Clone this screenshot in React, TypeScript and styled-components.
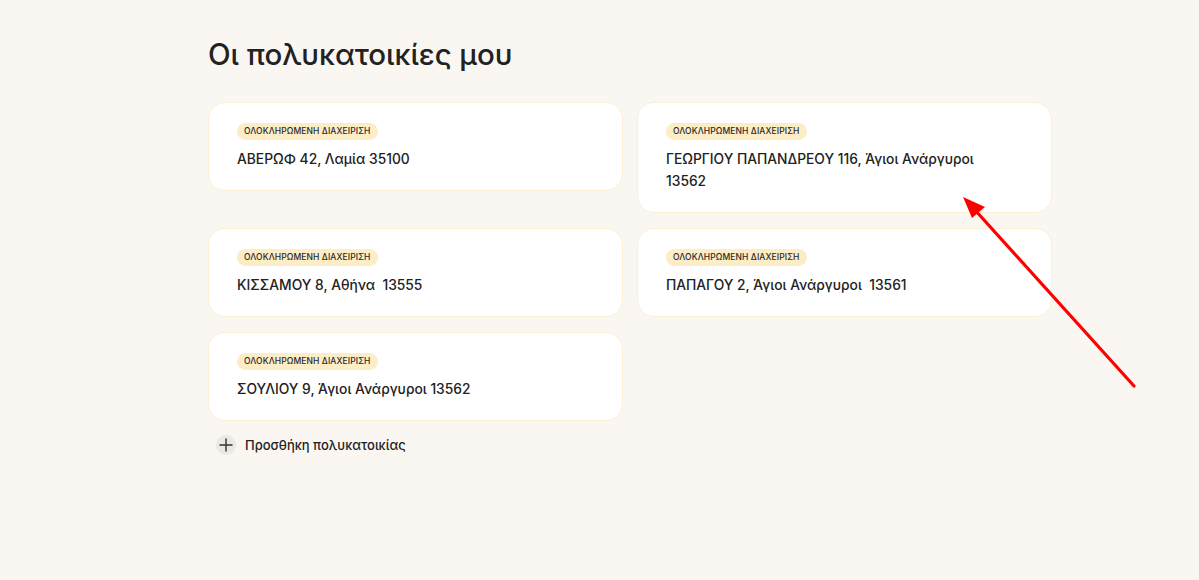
import { createGlobalStyle, styled } from "styled-components";

const GlobalStyle = createGlobalStyle`
  html, body {
    margin: 0;
    padding: 0;
    background: #faf7f2;
    font-family: Inter, "Noto Sans", sans-serif;
    color: #1f1f1f;
  }
`;

const Page = styled.div`
  position: relative;
  width: 1199px;
  height: 580px;
  overflow: hidden;
`;

const Content = styled.main`
  width: 843px;
  padding: 36px 0 0 208px;
`;

const Title = styled.h1`
  margin: 0 0 29px;
  font-size: 29.5px;
  font-weight: 500;
  line-height: 37px;
  letter-spacing: -0.1px;
  color: #222;
`;

const Grid = styled.div`
  display: grid;
  grid-template-columns: 415px 415px;
  column-gap: 14px;
  row-gap: 15px;
  align-items: start;
`;

const Card = styled.div`
  background: #fff;
  border: 1px solid #fbefd6;
  border-radius: 17px;
  padding: 20px 44px 20px 28px;
`;

const Badge = styled.div`
  width: fit-content;
  background: #fdedc6;
  border-radius: 9px;
  padding: 0 7px;
  height: 17px;
  line-height: 17px;
  font-size: 8.5px;
  font-weight: 500;
  letter-spacing: 0.1px;
  color: #2a2a2a;
`;

const Address = styled.div`
  margin-top: 8px;
  font-size: 13.8px;
  font-weight: 500;
  line-height: 22px;
  white-space: pre-wrap;
  color: #222;
`;

const AddRow = styled.button`
  display: flex;
  align-items: center;
  gap: 9px;
  margin: 14px 0 0 8px;
  padding: 0;
  border: none;
  background: none;
  font-family: Inter, "Noto Sans", sans-serif;
  font-size: 13px;
  font-weight: 500;
  color: #222;
  cursor: pointer;
`;

const PlusCircle = styled.span`
  display: flex;
  align-items: center;
  justify-content: center;
  width: 20px;
  height: 20px;
  border-radius: 50%;
  background: #ece8e2;
`;

const Annotation = styled.svg`
  position: absolute;
  left: 0;
  top: 0;
  pointer-events: none;
`;

const buildings = [
  "ΑΒΕΡΩΦ 42, Λαμία 35100",
  "ΓΕΩΡΓΙΟΥ ΠΑΠΑΝΔΡΕΟΥ 116, Άγιοι Ανάργυροι 13562",
  "ΚΙΣΣΑΜΟΥ 8, Αθήνα  13555",
  "ΠΑΠΑΓΟΥ 2, Άγιοι Ανάργυροι  13561",
  "ΣΟΥΛΙΟΥ 9, Άγιοι Ανάργυροι 13562",
];

export default function App() {
  return (
    <Page>
      <GlobalStyle />
      <Content>
        <Title>Οι πολυκατοικίες μου</Title>
        <Grid>
          {buildings.map((b) => (
            <Card key={b}>
              <Badge>ΟΛΟΚΛΗΡΩΜΕΝΗ ΔΙΑΧΕΙΡΙΣΗ</Badge>
              <Address>{b}</Address>
            </Card>
          ))}
        </Grid>
        <AddRow>
          <PlusCircle>
            <svg width="14" height="14" viewBox="0 0 14 14">
              <path
                d="M7 1v12M1 7h12"
                stroke="#333"
                strokeWidth="1.4"
                strokeLinecap="round"
              />
            </svg>
          </PlusCircle>
          Προσθήκη πολυκατοικίας
        </AddRow>
      </Content>
      <Annotation width="1199" height="580" viewBox="0 0 1199 580">
        <line
          x1="1134"
          y1="386"
          x2="975"
          y2="210"
          stroke="#ff0000"
          strokeWidth="3.2"
          strokeLinecap="round"
        />
        <polygon points="963,197 985,207 972,218" fill="#ff0000" />
      </Annotation>
    </Page>
  );
}
